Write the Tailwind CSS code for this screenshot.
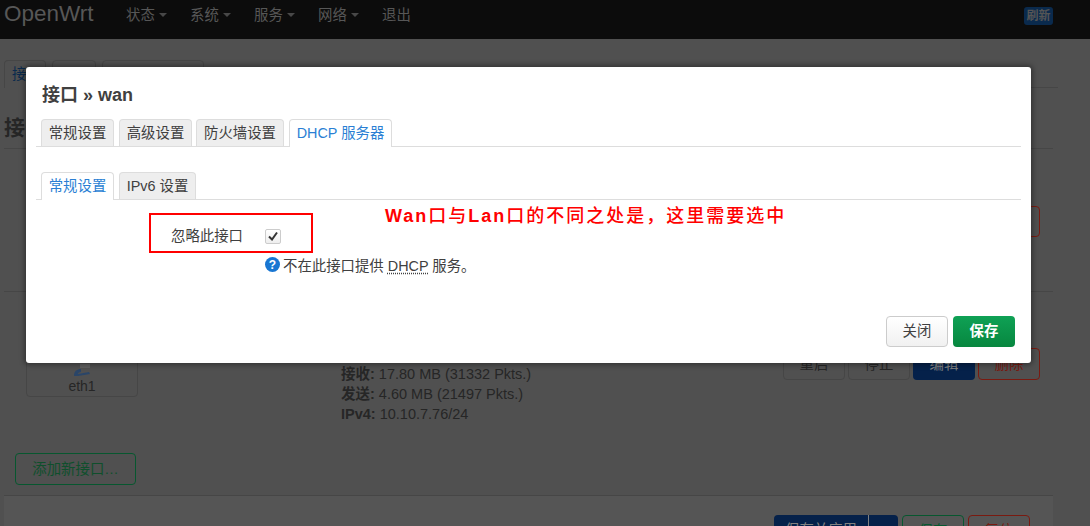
<!DOCTYPE html>
<html lang="zh-CN">
<head>
  <meta charset="UTF-8" />
  <title>OpenWrt</title>
  <script src="https://cdn.jsdelivr.net/npm/@tailwindcss/browser@4"></script>
</head>
<body class="relative h-[526px] w-[1090px] overflow-hidden bg-[#505050] font-['Liberation_Sans','Noto_Sans_CJK_SC',sans-serif] text-[14.4px] text-[#404040]">
  <!-- page behind the dialog -->
  <header class="flex h-[39px] bg-[#0c0c0c] text-[#575757]">
    <div class="ml-[4px] w-[122px] text-[22.5px] leading-[27px]">OpenWrt</div>
    <nav class="flex items-start gap-[24px] whitespace-nowrap pt-[5px] leading-[20px]">
      <span class="flex w-[40px] items-center gap-[4px]">状态<i class="h-0 w-0 shrink-0 border-x-[4px] border-t-[4px] border-x-transparent border-t-[#484848]"></i></span>
      <span class="flex w-[40px] items-center gap-[4px]">系统<i class="h-0 w-0 shrink-0 border-x-[4px] border-t-[4px] border-x-transparent border-t-[#484848]"></i></span>
      <span class="flex w-[40px] items-center gap-[4px]">服务<i class="h-0 w-0 shrink-0 border-x-[4px] border-t-[4px] border-x-transparent border-t-[#484848]"></i></span>
      <span class="flex w-[40px] items-center gap-[4px]">网络<i class="h-0 w-0 shrink-0 border-x-[4px] border-t-[4px] border-x-transparent border-t-[#484848]"></i></span>
      <span>退出</span>
    </nav>
    <span class="mt-[7px] ml-auto mr-[37px] h-[18px] w-[29px] rounded-[3px] bg-[#0a2a4d] text-center text-[12px] font-bold leading-[18px] text-[#555]">刷新</span>
  </header>

  <main class="ml-[4px] w-[1049px] text-[#262626]">
    <div class="mt-[21px] flex h-[28px] w-[1054px] gap-[6px] border-b border-[#464646]">
      <span class="h-[28px] w-[42px] rounded-t-[4px] border border-b-0 border-[#464646] bg-[#505050] pl-[7px] pt-[3px] leading-[20px] text-[#0a2a4d]">接口</span>
      <span class="h-[27px] w-[44px] rounded-t-[4px] border border-[#464646]"></span>
      <span class="h-[27px] w-[102px] rounded-t-[4px] border border-[#464646]"></span>
    </div>
    <div class="h-[61px] border-b border-[#464646] pt-[27px] text-[21px] font-bold leading-[26px]">接口</div>
    <div class="flex h-[143px] items-start justify-end border-b border-[#464646] pt-[57px] pr-[13px]">
      <span class="h-[31px] w-[62px] rounded-[4px] border border-[#7a1a10]"></span>
    </div>
    <div class="relative flex h-[204px] border-b border-[#464646]">
      <div class="ml-[22px] mt-[33px] h-[72px] w-[112px] rounded-[4px] border border-[#464646]">
        <svg class="mx-auto mt-[37px] h-[14px] w-[20px]" viewBox="0 0 20 14">
          <path d="M2 13 C2 8 5 6 9 6 L9 9 C7 9 6 10 6 11 L17 9 L18 11 L6 13 Z" fill="#2a4568" />
          <path d="M8 2 H18 M8 4 H18" stroke="#666" stroke-width="1.5" fill="none" />
        </svg>
        <div class="text-center text-[14px] leading-[18px]">eth1</div>
      </div>
      <div class="ml-[203px] mt-[72px] text-[14.5px] leading-[20px]">
        <div><b>接收:</b> 17.80 MB (31332 Pkts.)</div>
        <div><b>发送:</b> 4.60 MB (21497 Pkts.)</div>
        <div><b>IPv4:</b> 10.10.7.76/24</div>
      </div>
      <div class="absolute right-[13px] top-[56px] flex gap-[3px] text-center leading-[30px]">
        <span class="h-[32px] w-[62px] rounded-[4px] border border-[#464646]">重启</span>
        <span class="h-[32px] w-[62px] rounded-[4px] border border-[#464646]">停止</span>
        <span class="h-[32px] w-[62px] rounded-[4px] bg-[#05214a] leading-[32px] text-[#808080]">编辑</span>
        <span class="h-[32px] w-[62px] rounded-[4px] border border-[#7a1a10] text-[#7a1a10]">删除</span>
      </div>
      <span class="absolute bottom-[10px] left-[11px] h-[32px] w-[121px] rounded-[4px] border border-[#07572f] text-center leading-[30px] text-[#0f4f2c]">添加新接口…</span>
    </div>
    <div class="flex h-[30px] justify-end gap-[4px] bg-[#555555] pt-[19px] pr-[23px] text-center leading-[31px]">
      <span class="flex h-[32px] w-[124px] rounded-[4px] bg-[#05214a] text-[#808080]"><span class="w-[95px] border-r border-[#808080]">保存并应用</span></span>
      <span class="h-[32px] w-[62px] rounded-[4px] border border-[#07572f] text-[#07572f]">保存</span>
      <span class="h-[32px] w-[62px] rounded-[4px] border border-[#7a1a10] text-[#7a1a10]">复位</span>
    </div>
  </main>

  <!-- dialog -->
  <div class="absolute left-[26px] top-[67px] h-[296px] w-[1005px] rounded-[3px] bg-white pt-[16px] shadow-[0_0_5px_2px_rgba(0,0,0,0.35)]">
    <h4 class="ml-[16px] text-[18px] font-bold leading-[24px] text-[#404040]">接口 » wan</h4>

    <div class="mx-[10px] mt-[12px] flex h-[28px] gap-[5px] border-b border-[#ddd] pl-[5px] leading-[26px]">
      <span class="h-[27px] w-[73px] rounded-t-[4px] border border-b-0 border-[#ddd] bg-[#eee] text-center">常规设置</span>
      <span class="h-[27px] w-[73px] rounded-t-[4px] border border-b-0 border-[#ddd] bg-[#eee] text-center">高级设置</span>
      <span class="-ml-px h-[27px] w-[88px] rounded-t-[4px] border border-b-0 border-[#ddd] bg-[#eee] text-center">防火墙设置</span>
      <span class="h-[28px] w-[103px] rounded-t-[4px] border border-b-0 border-[#ddd] bg-white text-center text-[#2a7fd4]">DHCP 服务器</span>
    </div>
    <div class="mx-[10px] mt-[25px] flex h-[28px] gap-[5px] border-b border-[#ddd] pl-[5px] leading-[26px]">
      <span class="h-[28px] w-[73px] rounded-t-[4px] border border-b-0 border-[#ddd] bg-white text-center text-[#2a7fd4]">常规设置</span>
      <span class="h-[27px] w-[77px] rounded-t-[4px] border border-b-0 border-[#ddd] bg-[#eee] text-center">IPv6 设置</span>
    </div>

    <div class="mt-[26px] flex h-[20px] items-center leading-[20px]">
      <span class="ml-[145px] w-[94px]">忽略此接口</span>
      <span class="flex h-[15px] w-[16px] items-center justify-center rounded-[2px] border border-[#ccc] bg-linear-to-b from-white to-[#eee]">
        <svg class="h-[10px] w-[10px]" viewBox="0 0 10 10"><path d="M1 5.5 L4 8.5 L9 1.5" fill="none" stroke="#333" stroke-width="2" /></svg>
      </span>
    </div>
    <div class="ml-[239px] mt-[10px] flex h-[20px] items-center leading-[20px]">
      <span class="mr-[3px] -mt-[3px] flex h-[15px] w-[15px] items-center justify-center rounded-full bg-[#1976d2] text-[12px] font-bold leading-none text-white">?</span>
      <span>不在此接口提供 <span class="underline decoration-dotted decoration-[#404040] underline-offset-2">DHCP</span> 服务。</span>
    </div>

    <div class="mr-[16px] mt-[40px] flex justify-end gap-[5px] text-center">
      <span class="h-[31px] w-[62px] rounded-[4px] border border-[#ccc] bg-linear-to-b from-white to-[#f1f1f1] leading-[29px]">关闭</span>
      <span class="h-[31px] w-[62px] rounded-[4px] bg-linear-to-b from-[#0fa155] to-[#07873f] font-bold leading-[31px] text-white">保存</span>
    </div>

    <!-- annotation drawn over the dialog -->
    <div class="absolute left-[123px] top-[146px] h-[40px] w-[164px] border-2 border-[#f00]"></div>
    <div class="absolute left-[359px] top-[137px] text-[18px] font-medium leading-[24px] tracking-[2px] text-[#f00]"><b>Wan</b>口与<b>Lan</b>口的不同之处是，这里需要选中</div>
  </div>
</body>
</html>
